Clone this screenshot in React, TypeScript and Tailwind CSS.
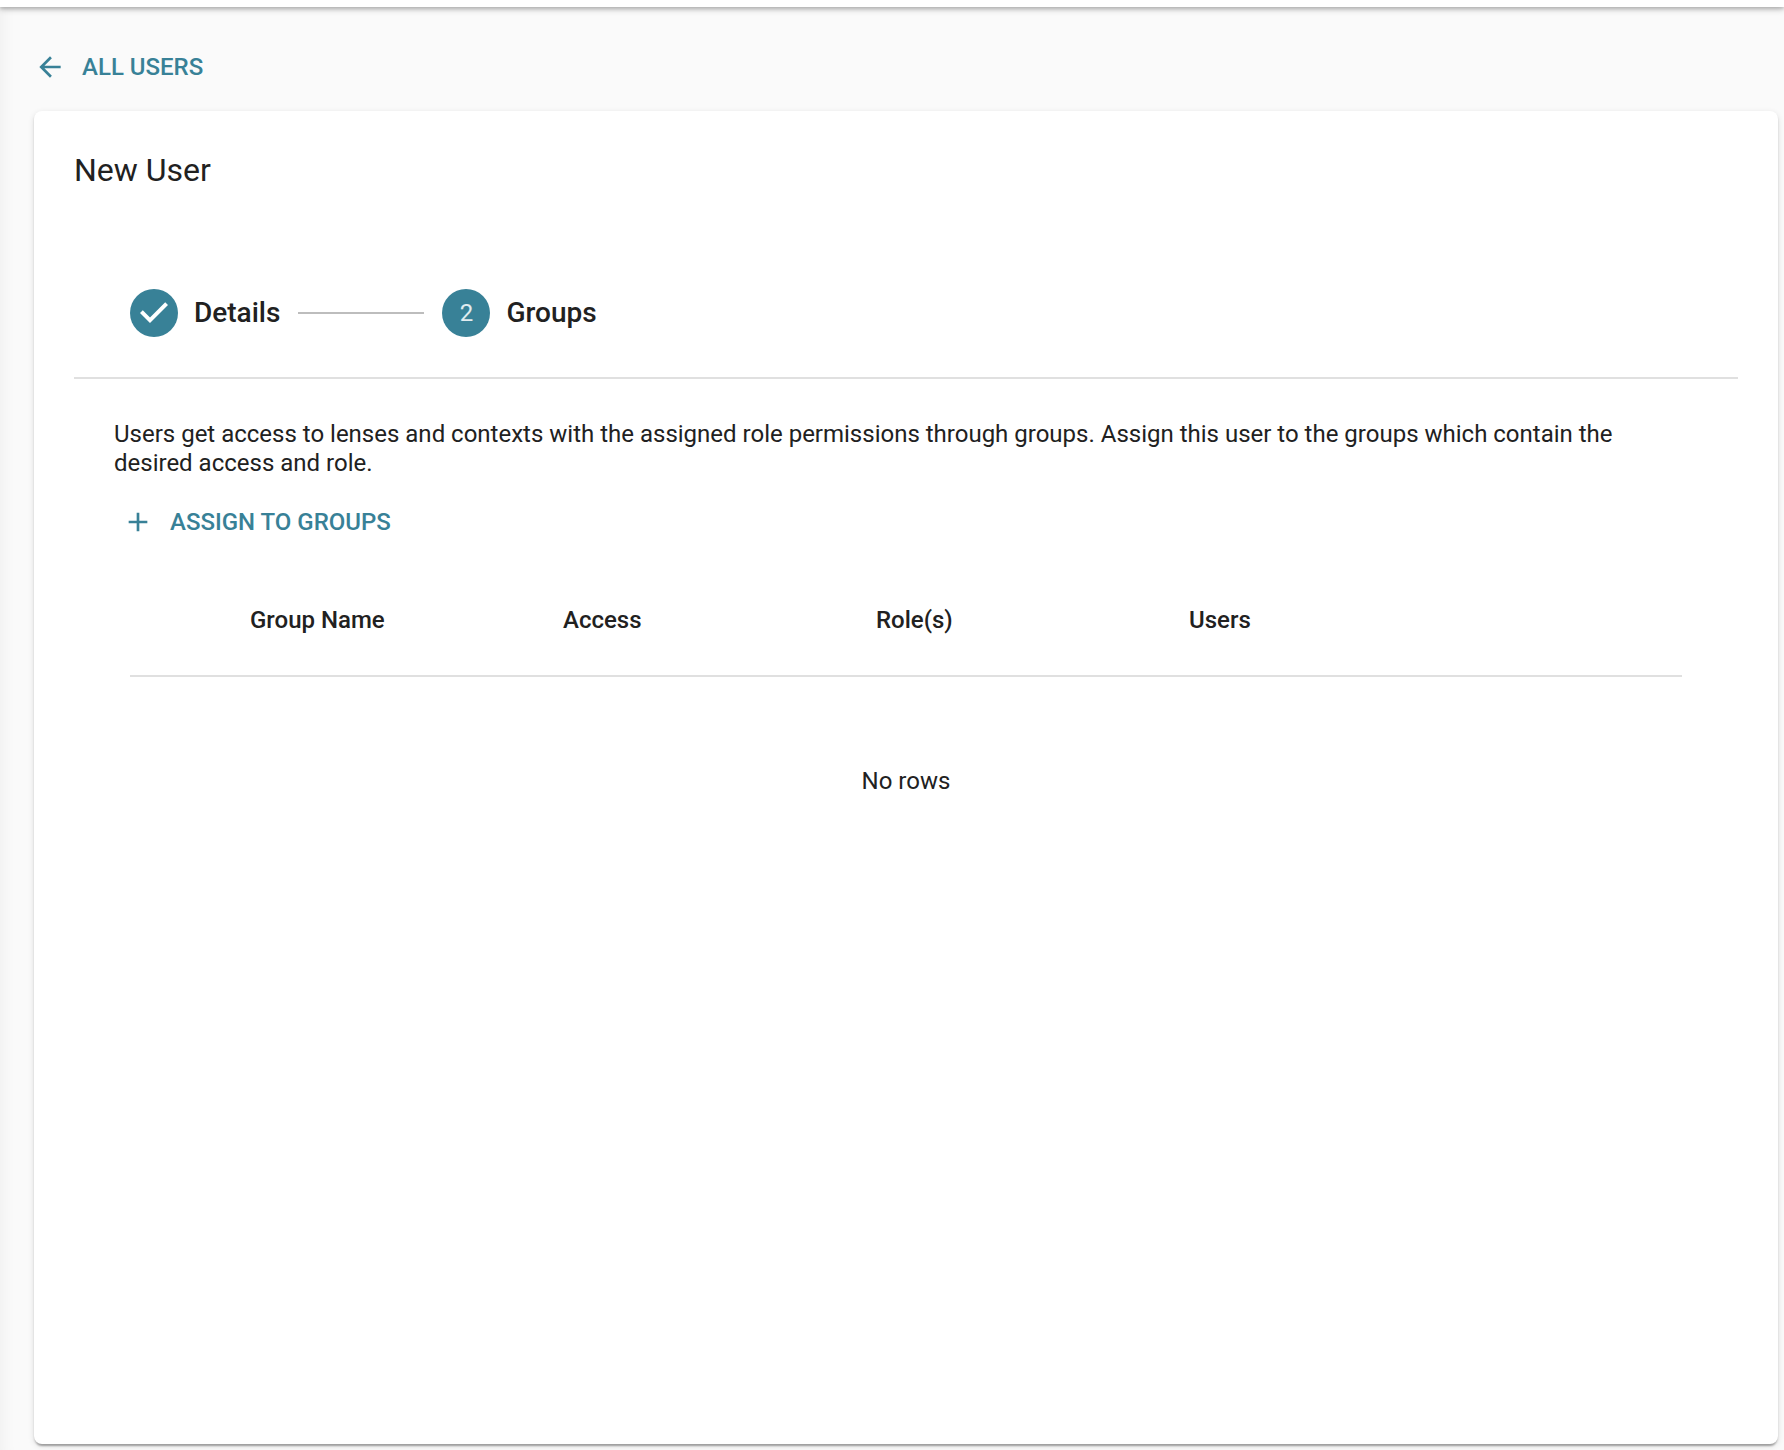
import { MdAdd, MdArrowBack } from "react-icons/md";

const columns = ["Group Name", "Access", "Role(s)", "Users"];

function CheckCircle() {
  return (
    <svg viewBox="0 0 24 24" className="h-12 w-12" aria-hidden="true">
      <circle cx="12" cy="12" r="12" fill="#388197" />
      <path d="M10 17l-5-5 1.4-1.4 3.6 3.6 7.6-7.6L19 8l-9 9z" fill="#fff" />
    </svg>
  );
}

function Stepper() {
  return (
    <ol className="flex items-center border-b-2 border-[#e0e0e0] px-14 pt-[100px] pb-10 text-[28px] leading-8 font-medium">
      <li className="flex items-center gap-4">
        <CheckCircle />
        Details
      </li>
      <li aria-hidden="true" className="mx-[18px] h-0.5 w-[126px] bg-[#bdbdbd]" />
      <li aria-current="step" className="flex items-center gap-4">
        <span className="flex h-12 w-12 items-center justify-center rounded-full bg-[#388197] text-2xl font-normal text-white/85">
          2
        </span>
        Groups
      </li>
    </ol>
  );
}

function GroupsTable() {
  return (
    <table className="w-full table-fixed border-collapse">
      <thead>
        <tr className="h-[110px] border-b-2 border-[#e0e0e0]">
          <td className="w-[100px]" />
          {columns.map((name) => (
            <th key={name} scope="col" className="px-5 text-left font-medium">
              {name}
            </th>
          ))}
          <td className="w-[200px]" />
        </tr>
      </thead>
      <tbody>
        <tr>
          <td colSpan={6} className="h-[210px] text-center">
            No rows
          </td>
        </tr>
      </tbody>
    </table>
  );
}

export default function App() {
  return (
    <div className="flex min-h-screen flex-col bg-[#fafafa] font-['Roboto',sans-serif] text-2xl leading-[29px] text-[#212121]">
      {/* Bottom edge of the app bar */}
      <header className="relative z-10 h-[7px] bg-white shadow-[0_2px_6px_rgba(0,0,0,0.28),0_2px_3px_rgba(0,0,0,0.1)]" />

      <main className="flex flex-1 flex-col pt-11 pr-1.5 pb-1.5 pl-[34px] shadow-[inset_16px_0_16px_-14px_rgba(0,0,0,0.05)]">
        <a
          href="#users"
          className="flex items-center gap-4 self-start font-medium text-[#388197] uppercase"
        >
          <MdArrowBack className="h-8 w-8" />
          All Users
        </a>

        <section className="mt-7 flex-1 rounded-lg bg-white px-10 pt-10 shadow-[0_4px_2px_-2px_rgba(0,0,0,0.2),0_2px_2px_rgba(0,0,0,0.14),0_2px_6px_rgba(0,0,0,0.12)]">
          <h1 className="text-[32px] leading-[38px]">New User</h1>

          <Stepper />

          <div className="px-10 pt-[41px]">
            <p className="pr-4">
              Users get access to lenses and contexts with the assigned role
              permissions through groups. Assign this user to the groups which
              contain the desired access and role.
            </p>

            <button
              type="button"
              className="mt-7 flex items-center gap-4 px-2 font-medium text-[#388197] uppercase"
            >
              <MdAdd className="h-8 w-8" />
              Assign to groups
            </button>

            <div className="mt-7 px-4">
              <GroupsTable />
            </div>
          </div>
        </section>
      </main>
    </div>
  );
}
